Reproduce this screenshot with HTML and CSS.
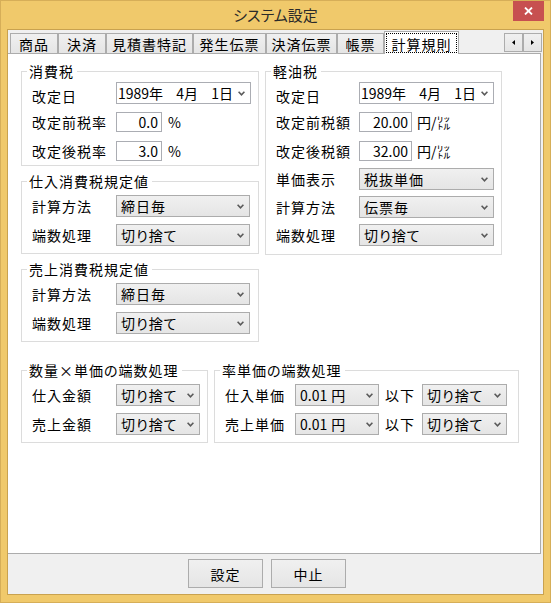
FILE: index.html
```html
<!DOCTYPE html>
<html lang="ja">
<head>
<meta charset="utf-8">
<title>システム設定</title>
<link rel="stylesheet" href="styles.css">
</head>
<body>
<div class="window">
  <header class="titlebar">
    <div class="title">システム設定</div>
    <div class="close">
      <svg width="9" height="8" viewBox="0 0 9 8"><path d="M1 0.5L8 7.5M8 0.5L1 7.5" stroke="#fff" stroke-width="1.8" fill="none"/></svg>
    </div>
  </header>
  <div class="client">
    <div class="tabbar">
      <div class="tab w48">商品</div>
      <div class="tab w48">決済</div>
      <div class="tab w87">見積書特記</div>
      <div class="tab w73">発生伝票</div>
      <div class="tab w71">決済伝票</div>
      <div class="tab w47">帳票</div>
      <div class="tab tab-active"><span class="focus">計算規則</span></div>
      <div class="scroll">
        <div class="sbtn"><svg width="3" height="5" viewBox="0 0 3 5"><path d="M3 0V5L0 2.5Z" fill="#000"/></svg></div>
        <div class="sbtn"><svg width="3" height="5" viewBox="0 0 3 5"><path d="M0 0V5L3 2.5Z" fill="#000"/></svg></div>
      </div>
    </div>
    <div class="panel">
      <div class="top">
        <div class="col">
          <section class="group g-shohi w-left">
            <div class="legend">消費税</div>
            <div class="rows">
              <div class="row date-row"><span class="label">改定日</span>
                <div class="date w135"><span class="dt"><span class="num">1989</span>年 <span class="num">4</span>月 <span class="num">1</span>日</span>
                  <svg class="arr" width="7" height="5" viewBox="0 0 7 5"><path d="M0.6 0.8L3.5 3.8L6.4 0.8" fill="none" stroke="#5a5a5a" stroke-width="1.6"/></svg></div>
              </div>
              <div class="row"><span class="label">改定前税率</span><div class="input w46"><span class="num">0.0</span></div><span class="unit">%</span></div>
              <div class="row"><span class="label">改定後税率</span><div class="input w46"><span class="num">3.0</span></div><span class="unit">%</span></div>
            </div>
          </section>
          <section class="group g-combo w-left">
            <div class="legend">仕入消費税規定値</div>
            <div class="rows">
              <div class="row"><span class="label">計算方法</span>
                <div class="combo w134"><span>締日毎</span><svg class="arr" width="7" height="5" viewBox="0 0 7 5"><path d="M0.6 0.8L3.5 3.8L6.4 0.8" fill="none" stroke="#5a5a5a" stroke-width="1.6"/></svg></div></div>
              <div class="row"><span class="label">端数処理</span>
                <div class="combo w134"><span>切り捨て</span><svg class="arr" width="7" height="5" viewBox="0 0 7 5"><path d="M0.6 0.8L3.5 3.8L6.4 0.8" fill="none" stroke="#5a5a5a" stroke-width="1.6"/></svg></div></div>
            </div>
          </section>
          <section class="group g-combo w-left">
            <div class="legend">売上消費税規定値</div>
            <div class="rows">
              <div class="row"><span class="label">計算方法</span>
                <div class="combo w134"><span>締日毎</span><svg class="arr" width="7" height="5" viewBox="0 0 7 5"><path d="M0.6 0.8L3.5 3.8L6.4 0.8" fill="none" stroke="#5a5a5a" stroke-width="1.6"/></svg></div></div>
              <div class="row"><span class="label">端数処理</span>
                <div class="combo w134"><span>切り捨て</span><svg class="arr" width="7" height="5" viewBox="0 0 7 5"><path d="M0.6 0.8L3.5 3.8L6.4 0.8" fill="none" stroke="#5a5a5a" stroke-width="1.6"/></svg></div></div>
            </div>
          </section>
        </div>
        <section class="group g-keiyu">
          <div class="legend">軽油税</div>
          <div class="rows">
            <div class="row date-row"><span class="label label-r">改定日</span>
              <div class="date w135"><span class="dt"><span class="num">1989</span>年 <span class="num">4</span>月 <span class="num">1</span>日</span>
                <svg class="arr" width="7" height="5" viewBox="0 0 7 5"><path d="M0.6 0.8L3.5 3.8L6.4 0.8" fill="none" stroke="#5a5a5a" stroke-width="1.6"/></svg></div>
            </div>
            <div class="row"><span class="label label-r">改定前税額</span><div class="input w53"><span class="num">20.00</span></div><span class="unit unit-r">円/㍑</span></div>
            <div class="row"><span class="label label-r">改定後税額</span><div class="input w53"><span class="num">32.00</span></div><span class="unit unit-r">円/㍑</span></div>
            <div class="row tight"><span class="label label-r">単価表示</span>
              <div class="combo w135"><span>税抜単価</span><svg class="arr" width="7" height="5" viewBox="0 0 7 5"><path d="M0.6 0.8L3.5 3.8L6.4 0.8" fill="none" stroke="#5a5a5a" stroke-width="1.6"/></svg></div></div>
            <div class="row tight"><span class="label label-r">計算方法</span>
              <div class="combo w135"><span>伝票毎</span><svg class="arr" width="7" height="5" viewBox="0 0 7 5"><path d="M0.6 0.8L3.5 3.8L6.4 0.8" fill="none" stroke="#5a5a5a" stroke-width="1.6"/></svg></div></div>
            <div class="row tight"><span class="label label-r">端数処理</span>
              <div class="combo w135"><span>切り捨て</span><svg class="arr" width="7" height="5" viewBox="0 0 7 5"><path d="M0.6 0.8L3.5 3.8L6.4 0.8" fill="none" stroke="#5a5a5a" stroke-width="1.6"/></svg></div></div>
          </div>
        </section>
      </div>
      <div class="bottom">
        <section class="group g-combo w-qty">
          <div class="legend">数量×単価の端数処理</div>
          <div class="rows">
            <div class="row"><span class="label">仕入金額</span>
              <div class="combo w84"><span>切り捨て</span><svg class="arr" width="7" height="5" viewBox="0 0 7 5"><path d="M0.6 0.8L3.5 3.8L6.4 0.8" fill="none" stroke="#5a5a5a" stroke-width="1.6"/></svg></div></div>
            <div class="row"><span class="label">売上金額</span>
              <div class="combo w84"><span>切り捨て</span><svg class="arr" width="7" height="5" viewBox="0 0 7 5"><path d="M0.6 0.8L3.5 3.8L6.4 0.8" fill="none" stroke="#5a5a5a" stroke-width="1.6"/></svg></div></div>
          </div>
        </section>
        <section class="group g-combo w-rate">
          <div class="legend">率単価の端数処理</div>
          <div class="rows">
            <div class="row"><span class="label label-s">仕入単価</span>
              <div class="combo w84"><span><span class="num">0.01</span> 円</span><svg class="arr" width="7" height="5" viewBox="0 0 7 5"><path d="M0.6 0.8L3.5 3.8L6.4 0.8" fill="none" stroke="#5a5a5a" stroke-width="1.6"/></svg></div>
              <span class="ika">以下</span>
              <div class="combo w85"><span>切り捨て</span><svg class="arr" width="7" height="5" viewBox="0 0 7 5"><path d="M0.6 0.8L3.5 3.8L6.4 0.8" fill="none" stroke="#5a5a5a" stroke-width="1.6"/></svg></div></div>
            <div class="row"><span class="label label-s">売上単価</span>
              <div class="combo w84"><span><span class="num">0.01</span> 円</span><svg class="arr" width="7" height="5" viewBox="0 0 7 5"><path d="M0.6 0.8L3.5 3.8L6.4 0.8" fill="none" stroke="#5a5a5a" stroke-width="1.6"/></svg></div>
              <span class="ika">以下</span>
              <div class="combo w85"><span>切り捨て</span><svg class="arr" width="7" height="5" viewBox="0 0 7 5"><path d="M0.6 0.8L3.5 3.8L6.4 0.8" fill="none" stroke="#5a5a5a" stroke-width="1.6"/></svg></div></div>
          </div>
        </section>
      </div>
    </div>
    <div class="footer">
      <button class="btn" type="button">設定</button>
      <button class="btn" type="button">中止</button>
    </div>
  </div>
</div>
</body>
</html>
```

FILE: styles.css
```css
* { box-sizing: border-box; }
html, body { margin: 0; padding: 0; }
body {
  width: 551px;
  height: 603px;
  overflow: hidden;
  font-family: "Noto Sans CJK JP", "Noto Sans", sans-serif;
  font-size: 14px;
  color: #000;
  letter-spacing: 1px;
  font-feature-settings: "palt";
}

.window {
  width: 551px;
  height: 603px;
  background: #f0c96b;
  border: 1px solid #d6ae58;
  display: flex;
  flex-direction: column;
}

.titlebar {
  height: 28px;
  flex: none;
  display: grid;
  grid-template-columns: 1fr auto 1fr;
}
.title {
  grid-column: 2;
  font-size: 15px;
  line-height: 28px;
  letter-spacing: 0;
  color: #2a2a2a;
}
.close {
  grid-column: 3;
  justify-self: end;
  align-self: start;
  width: 31px;
  height: 20px;
  margin-right: 6px;
  background: #c75050;
  display: flex;
  align-items: center;
  justify-content: center;
}

.client {
  flex: 1;
  margin: 0 6px 7px 6px;
  border: 1px solid #c9a24f;
  background: #f0f0f0;
  display: flex;
  flex-direction: column;
}

/* tabs */
.tabbar {
  height: 23px;
  flex: none;
  display: flex;
  align-items: flex-start;
  padding: 1px 1px 0 2px;
}
.tab {
  margin-top: 2px;
  height: 20px;
  border: 1px solid #acacac;
  border-bottom: 0;
  background: linear-gradient(#f0f0f0, #e5e5e5);
  text-align: center;
  line-height: 17px;
  padding-top: 2px;
  white-space: nowrap;
}
.w48 { width: 48px; }
.w87 { width: 87px; }
.w73 { width: 73px; }
.w71 { width: 71px; }
.w47 { width: 47px; }
.tab-active {
  margin-top: 0;
  height: 23px;
  width: 75px;
  background: #fff;
  position: relative;
  z-index: 1;
  padding: 1px 1px 0 1px;
}
.focus {
  display: block;
  height: 20px;
  border: 1px dotted #000;
  line-height: 18px;
  padding-top: 1px;
}
.scroll {
  margin-left: auto;
  margin-top: 2px;
  display: flex;
}
.sbtn {
  width: 19px;
  height: 19px;
  border: 1px solid #acacac;
  background: linear-gradient(#f0f0f0, #e5e5e5);
  display: flex;
  align-items: center;
  justify-content: center;
}

.panel {
  height: 501px;
  flex: none;
  border: 1px solid #acacac;
  border-left: 0;
  margin-right: 2px;
  background: #fff;
  padding: 17px 0 0 13px;
}
.top {
  display: flex;
  align-items: flex-start;
  gap: 6px;
}
.col {
  display: flex;
  flex-direction: column;
  gap: 15px;
}
.bottom {
  display: flex;
  gap: 6px;
  margin-top: 28px;
}

/* group boxes */
.group {
  border: 1px solid #dcdcdc;
  padding: 0 6px 3px 10px;
}
.legend {
  width: max-content;
  margin: -9px 0 0 -5px;
  padding: 0 3px 0 2px;
  background: #fff;
  line-height: 16px;
}
.rows {
  display: flex;
  flex-direction: column;
  gap: 7px;
  margin-top: 3px;
}
.g-combo { padding-bottom: 7px; }
.g-combo .rows { margin-top: 6px; }
.g-keiyu { width: 237px; padding-bottom: 8px; }
.g-keiyu .tight { margin-top: -1px; }
.w-left { width: 238px; }
.w-qty { width: 187px; }
.w-rate { width: 305px; }

.row {
  display: flex;
  align-items: center;
  height: 22px;
}
.label {
  width: 84px;
  flex: none;
  line-height: 18px;
  white-space: nowrap;
}
.label-r { width: 83px; }
.label-s { width: 70px; }
.date-row .label { margin-top: 6px; }

.num { letter-spacing: 0; }

.combo, .date {
  height: 22px;
  flex: none;
  display: flex;
  align-items: center;
  justify-content: space-between;
  white-space: nowrap;
}
.combo {
  border: 1px solid #acacac;
  background: linear-gradient(#f0f0f0, #e5e5e5);
  padding: 0 5px 0 4px;
}
.date {
  border: 1px solid #abadb3;
  background: #fff;
  padding: 0 5px 0 1px;
}
.dt { word-spacing: 8px; }
.arr { flex: none; margin-top: 1px; }
.w134 { width: 134px; }
.w135 { width: 135px; }
.w84 { width: 84px; }
.w85 { width: 85px; }

.input {
  height: 20px;
  flex: none;
  border: 1px solid #abadb3;
  background: #fff;
  text-align: right;
  padding-right: 3px;
  line-height: 18px;
}
.w46 { width: 46px; }
.w53 { width: 53px; }
.unit { margin-left: 6px; letter-spacing: 0; }
.unit-r { margin-left: 5px; }
.ika { margin: 0 7px 0 6px; white-space: nowrap; }

/* footer buttons */
.footer {
  flex: 1;
  display: flex;
  align-items: flex-start;
  gap: 8px;
  padding: 5px 0 0 180px;
}
.btn {
  width: 75px;
  height: 29px;
  margin: 0;
  padding: 0;
  border: 1px solid #acacac;
  border-radius: 0;
  background: linear-gradient(#f0f0f0, #e5e5e5);
  font-family: inherit;
  font-size: 14px;
  letter-spacing: 1px;
  color: #000;
  font-feature-settings: "palt";
}
```
